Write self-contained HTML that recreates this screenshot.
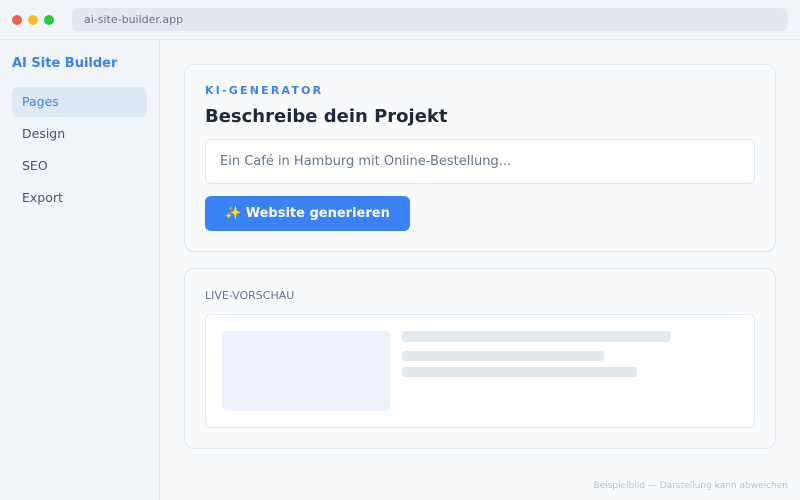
<!DOCTYPE html>
<html><head><meta charset="utf-8"><style>
*{box-sizing:border-box;margin:0;padding:0}
body{width:800px;height:500px;overflow:hidden;background:#f8fafc;font-family:"DejaVu Sans","Liberation Sans",sans-serif;position:relative}
.top{position:absolute;left:0;top:0;width:800px;height:40px;background:#f1f5f9;border-bottom:1px solid #e2e8f0}
.dot{position:absolute;top:15px;width:10px;height:10px;border-radius:50%}
.url{position:absolute;left:72px;top:8px;width:716px;height:23px;background:#e2e8f0;border-radius:6px;font-size:11px;color:#64748b;padding:5px 12px}
.side{position:absolute;left:0;top:40px;width:160px;height:460px;background:#f1f5f9;border-right:1px solid #e2e8f0}
.brand{position:absolute;left:12px;top:16px;font-size:13px;font-weight:bold;color:#3b82f6}
.nav{position:absolute;left:12px;width:135px;height:30px;border-radius:6px;font-size:12.5px;color:#475569;padding:7px 10px}
.card{position:absolute;left:184px;width:592px;background:#f8fafc;border:1px solid #e2e8f0;border-radius:10px}
.line{position:absolute;left:402px;height:10px;background:#e2e8f0;border-radius:3px}
</style></head><body>
<div class="top">
<div class="dot" style="left:12px;background:#ef5f57"></div>
<div class="dot" style="left:28px;background:#fbbc2e"></div>
<div class="dot" style="left:44px;background:#28c840"></div>
<div class="url">ai-site-builder.app</div>
</div>
<div class="side">
<div class="brand">AI Site Builder</div>
<div class="nav" style="top:47px;background:#dfe9f6;color:#3b82f6">Pages</div>
<div class="nav" style="top:79px">Design</div>
<div class="nav" style="top:111px">SEO</div>
<div class="nav" style="top:143px">Export</div>
</div>
<div class="card" style="top:64px;height:188px">
<div style="position:absolute;left:20px;top:19px;font-size:11px;font-weight:bold;letter-spacing:2.2px;color:#3b82f6">KI-GENERATOR</div>
<div style="position:absolute;left:20px;top:41px;font-size:18px;font-weight:bold;color:#1e293b">Beschreibe dein Projekt</div>
<div style="position:absolute;left:20px;top:74px;width:550px;height:45px;background:#fff;border:1px solid #e2e8f0;border-radius:6px;font-size:13px;color:#64748b;padding:14px 14px">Ein Café in Hamburg mit Online-Bestellung...</div>
<div style="position:absolute;left:20px;top:131px;width:205px;height:35px;background:#3b82f6;border-radius:6px;color:#fff;font-size:13px;font-weight:bold;padding:10px 0 0 20px">✨ Website generieren</div>
</div>
<div class="card" style="top:268px;height:181px">
<div style="position:absolute;left:20px;top:20px;font-size:11px;color:#64748b">LIVE-VORSCHAU</div>
<div style="position:absolute;left:20px;top:45px;width:550px;height:114px;background:#fff;border:1px solid #e2e8f0;border-radius:6px"></div>
</div>
<div style="position:absolute;left:222px;top:331px;width:168px;height:80px;background:#edf3fe;border-radius:4px"></div>
<div class="line" style="top:331px;width:269px;height:11px"></div>
<div class="line" style="top:351px;width:202px"></div>
<div class="line" style="top:367px;width:235px"></div>
<div style="position:absolute;right:12px;top:481px;font-size:9px;color:#b4c0d0">Beispielbild — Darstellung kann abweichen</div>
</body></html>
